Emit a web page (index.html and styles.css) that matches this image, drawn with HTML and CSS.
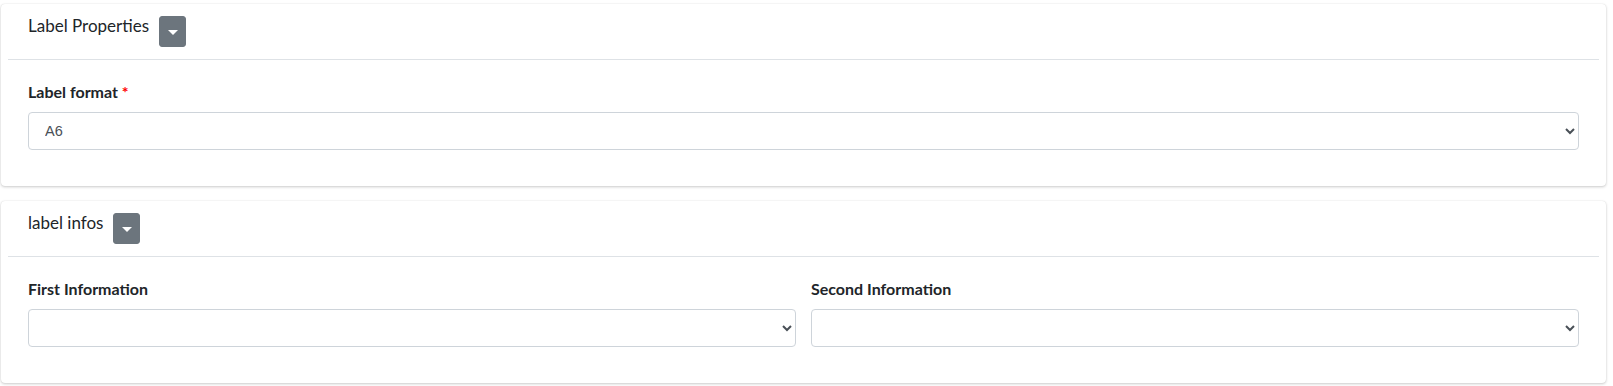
FILE: index.html
```html
<!doctype html>
<html lang="en">
<head>
    <meta charset="utf-8"/>
    <title>Label settings</title>
    <link rel="stylesheet" href="styles.css">
</head>

<body>
    <div class="wrapper">
        <!-- Label properties -->
        <div class="card">
            <div class="card-header">
                <h3 class="card-title">Label Properties</h3>
                <button type="button" class="btn-tool"><span class="caret"></span></button>
            </div>
            <div class="card-body">
                <div class="form-group">
                    <label for="format">Label format <span class="req">*</span></label>
                    <select id="format" class="form-control">
                        <option>A6</option>
                        <option>A5</option>
                        <option>A4</option>
                    </select>
                </div>
            </div>
        </div>

        <!-- label infos -->
        <div class="card">
            <div class="card-header">
                <h3 class="card-title">label infos</h3>
                <button type="button" class="btn-tool"><span class="caret"></span></button>
            </div>
            <div class="card-body">
                <div class="row">
                    <div class="form-group">
                        <label for="info1">First Information</label>
                        <select id="info1" class="form-control">
                            <option></option>
                        </select>
                    </div>
                    <div class="form-group">
                        <label for="info2">Second Information</label>
                        <select id="info2" class="form-control">
                            <option></option>
                        </select>
                    </div>
                </div>
            </div>
        </div>
    </div>
</body>
</html>
```

FILE: styles.css
```css
* {
    box-sizing: border-box;
}

body {
    margin: 0;
    background: #fff;
    font-family: "Lato", "Noto Sans", sans-serif;
    font-size: 16px;
    color: #212529;
}

.wrapper {
    padding: 4px 7px 0 1px;
}

.card {
    background: #fff;
    border-radius: 4px;
    box-shadow: 0 0 1px rgba(0, 0, 0, .125), 0 1px 3px rgba(0, 0, 0, .2);
    padding: 0 7px;
    margin-bottom: 15px;
}

.card-header {
    display: flex;
    align-items: flex-start;
    padding: 12px 20px;
    border-bottom: 1px solid #dee2e6;
}

.card-title {
    margin: 0;
    font-size: 17px;
    font-weight: 400;
    line-height: 1.2;
    color: #212529;
}

.btn-tool {
    display: flex;
    align-items: center;
    justify-content: center;
    width: 27px;
    height: 31px;
    margin-left: 10px;
    padding: 0;
    background: #6c757d;
    border: 1px solid #6c757d;
    border-radius: 3px;
    cursor: pointer;
}

.caret {
    width: 0;
    height: 0;
    border-left: 5px solid transparent;
    border-right: 5px solid transparent;
    border-top: 5px solid #fff;
    margin-top: 2px;
}

.card-body {
    padding: 20px;
}

.form-group {
    margin-bottom: 16px;
}

.form-group label {
    display: block;
    margin-bottom: 8px;
    font-weight: 700;
    font-size: 16px;
    line-height: 24px;
}

.req {
    color: #ff0000;
}

.form-control {
    display: block;
    width: 100%;
    height: 38px;
    padding: 6px 8px 6px 12px;
    font-family: "Liberation Sans", Arial, sans-serif;
    font-size: 14.5px;
    color: #495057;
    background: #fff;
    border: 1px solid #ced4da;
    border-radius: 4px;
}

.row {
    display: grid;
    grid-template-columns: 1fr 1fr;
    column-gap: 15px;
}
```
